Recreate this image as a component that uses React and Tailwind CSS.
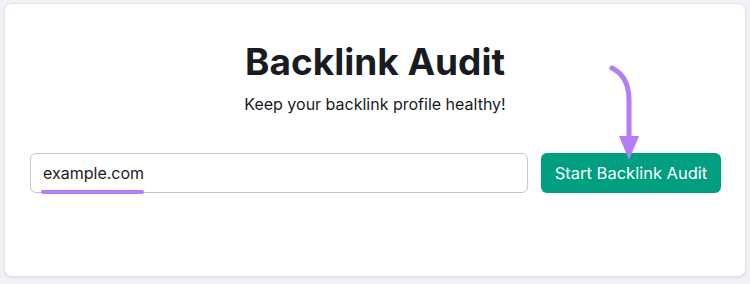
export default function App() {
  return (
    <div className="relative h-[284px] w-[750px] bg-[#f1f2f5] p-[3px] pl-[4px] font-['Inter',sans-serif]">
      <div className="h-[274px] w-[742px] rounded-lg border border-[#e2e3e8] bg-white pt-[36px] shadow-[0_1px_2px_rgba(0,0,0,0.08)]">
        <h1 className="text-center text-[37px] font-bold leading-[44px] text-[#191b23]">Backlink Audit</h1>
        <p className="mt-[8px] text-center text-[16px] leading-[24px] text-[#191b23]">Keep your backlink profile healthy!</p>
        <div className="mt-[37px] flex gap-[13px] pl-[25px]">
          <div className="relative h-[40px] w-[498px]">
            <input
              readOnly
              value="example.com"
              className="h-full w-full rounded-md border border-[#c4c6cc] bg-white px-[12px] text-[16px] text-[#191b23] outline-none"
            />
            <div className="absolute left-[11px] top-[37px] h-[4px] w-[103px] rounded-sm bg-[#b47cf6]" />
          </div>
          <button className="h-[40px] w-[180px] rounded-md bg-[#009f81] text-[16.5px] text-white">Start Backlink Audit</button>
        </div>
      </div>
      <svg className="absolute left-[600px] top-[55px] h-[110px] w-[45px]" viewBox="0 0 45 110" fill="none">
        <path d="M12 13 C 22 18, 29 28, 29 45 L 29 84" stroke="#b47cf6" strokeWidth="5" strokeLinecap="round" />
        <polygon points="19,81 39,81 29,105" fill="#b47cf6" />
      </svg>
    </div>
  );
}
